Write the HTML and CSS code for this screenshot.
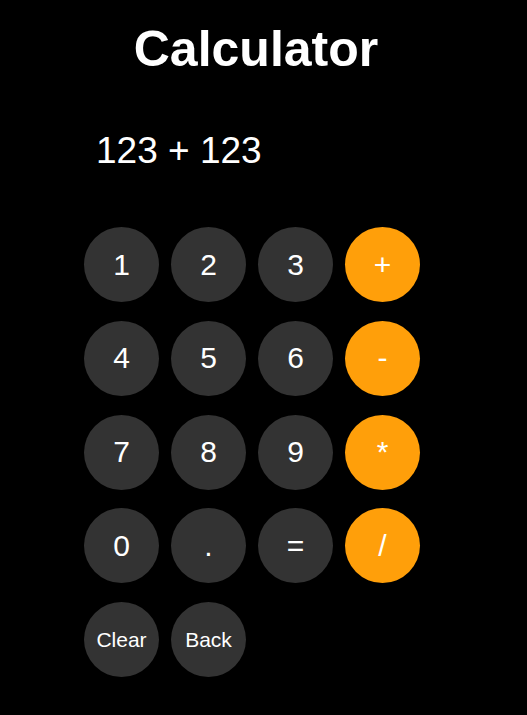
FILE: index.html
```
<!DOCTYPE html>
<html>
<head>
<meta charset="utf-8">
<link rel="stylesheet" href="styles.css">
<title>Calculator</title>
</head>
<body>
<div class="app">
  <h1 class="title">Calculator</h1>
  <div class="calc">
    <div class="display">123 + 123</div>
    <div class="keys">
      <button class="key">1</button>
      <button class="key">2</button>
      <button class="key">3</button>
      <button class="key op">+</button>
      <button class="key">4</button>
      <button class="key">5</button>
      <button class="key">6</button>
      <button class="key op">-</button>
      <button class="key">7</button>
      <button class="key">8</button>
      <button class="key">9</button>
      <button class="key op">*</button>
      <button class="key">0</button>
      <button class="key">.</button>
      <button class="key">=</button>
      <button class="key op">/</button>
      <button class="key small">Clear</button>
      <button class="key small">Back</button>
    </div>
  </div>
</div>
</body>
</html>
```
FILE: styles.css
```
html, body {
  background: #000;
}
body {
  margin: 8px;
  color: #fff;
  font-family: "Liberation Sans", Arial, sans-serif;
}
.app {
  width: 496px;
}
.title {
  margin: 13px 0 0;
  font-size: 50px;
  font-weight: bold;
  text-align: center;
  line-height: 57px;
}
.calc {
  margin-left: 76px;
  width: 336px;
}
.display {
  margin-top: 51px;
  padding-left: 12px;
  font-size: 37px;
  line-height: 44px;
  height: 44px;
}
.keys {
  margin-top: 54px;
  display: grid;
  grid-template-columns: repeat(4, 75px);
  column-gap: 12px;
  row-gap: 18.75px;
}
.key {
  width: 75px;
  height: 75px;
  border: none;
  border-radius: 50%;
  background: #333333;
  color: #fff;
  font-family: "Liberation Sans", Arial, sans-serif;
  font-size: 30px;
  padding: 0;
  display: flex;
  align-items: center;
  justify-content: center;
}
.key.op {
  background: #ff9f0a;
}
.key.small {
  font-size: 21px;
}
```
